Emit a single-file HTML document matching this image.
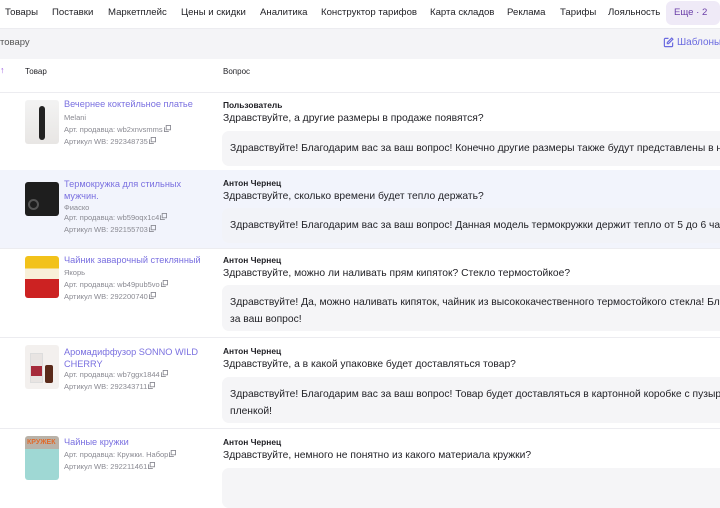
<!DOCTYPE html>
<html><head><meta charset="utf-8"><style>
*{margin:0;padding:0;box-sizing:border-box}
body{width:720px;height:480px;overflow:hidden;background:#fff;font-family:"Liberation Sans","Noto Sans CJK SC",sans-serif;color:#1f1f24;position:relative}
.a{position:absolute;white-space:nowrap}
.nav{font-size:9.6px;top:7px}
.pill{position:absolute;left:666px;top:1px;width:54px;height:24px;background:#efeaf7;border-radius:6px}
.t{color:#7a70e0;font-size:9.2px}
.m{color:#8a8a92;font-size:7.5px}
.au{font-size:8.4px;font-weight:bold}
.q{font-size:10.3px}
.box{position:absolute;left:222px;width:520px;background:#f5f5f7;border-radius:7px}
.bt{font-size:10.3px;line-height:17px;position:absolute;left:230px}
.img{position:absolute;left:25px;width:34px;border-radius:3px;overflow:hidden}
.hr{position:absolute;left:0;width:720px;height:1px;background:#ececf0}
svg.c{width:7px;height:7px;vertical-align:0px;margin-left:1px}
</style></head><body>
<div class="pill"></div>
<div class="a nav" style="left:5px">Товары</div>
<div class="a nav" style="left:52px">Поставки</div>
<div class="a nav" style="left:108px">Маркетплейс</div>
<div class="a nav" style="left:181px">Цены и скидки</div>
<div class="a nav" style="left:260px">Аналитика</div>
<div class="a nav" style="left:321px">Конструктор тарифов</div>
<div class="a nav" style="left:430px">Карта складов</div>
<div class="a nav" style="left:507px">Реклама</div>
<div class="a nav" style="left:560px">Тарифы</div>
<div class="a nav" style="left:608px">Лояльность</div>
<div class="a nav" style="left:674px;color:#6b3fa8">Еще · 2</div>
<div class="hr" style="top:28px"></div>
<div style="position:absolute;top:29px;left:0;width:720px;height:30px;background:#f4f4f7"></div>
<div class="a" style="left:0;top:37px;font-size:9.5px;color:#555">товару</div>
<svg class="a" style="left:663px;top:37px" width="11" height="11" viewBox="0 0 12 12" fill="none" stroke="#6a6ae0" stroke-width="1.3"><path d="M6 1.5H2.5a1 1 0 0 0-1 1v7a1 1 0 0 0 1 1h7a1 1 0 0 0 1-1V6"/><path d="M9.5 1.2l1.3 1.3L6 7.3H4.7V6z"/></svg>
<div class="a" style="left:677px;top:37px;font-size:10px;color:#6a6ae0">Шаблоны</div>
<div class="a" style="left:0;top:65px;font-size:9px;color:#9b5ce0">↑</div>
<div class="a" style="left:25px;top:67px;font-size:8px">Товар</div>
<div class="a" style="left:223px;top:67px;font-size:8px">Вопрос</div>
<div class="hr" style="top:92px"></div>

<!-- row 1 -->
<div class="img" style="top:100px;height:44px;background:linear-gradient(#f3f3f3,#e8e6e4)"><div style="position:absolute;left:14px;top:6px;width:6px;height:34px;background:#222;border-radius:3px"></div></div>
<div class="a t" style="left:64px;top:99px">Вечернее коктейльное платье</div>
<div class="a m" style="left:64px;top:113px">Melani</div>
<div class="a m" style="left:64px;top:125px">Арт. продавца: wb2xnvsmms<svg class="c" viewBox="0 0 8 8" fill="none" stroke="#8a8a92"><rect x="2.5" y=".5" width="5" height="5"/><path d="M.5 2.5v5h5"/></svg></div>
<div class="a m" style="left:64px;top:137px">Артикул WB: 292348735<svg class="c" viewBox="0 0 8 8" fill="none" stroke="#8a8a92"><rect x="2.5" y=".5" width="5" height="5"/><path d="M.5 2.5v5h5"/></svg></div>
<div class="a au" style="left:223px;top:100px">Пользователь</div>
<div class="a q" style="left:223px;top:113px">Здравствуйте, а другие размеры в продаже появятся?</div>
<div class="box" style="top:131px;height:35px"></div>
<div class="a bt" style="top:140px">Здравствуйте! Благодарим вас за ваш вопрос! Конечно другие размеры также будут представлены в н</div>

<!-- row 2 -->
<div style="position:absolute;top:170px;left:0;width:720px;height:78px;background:#f2f4fc"></div>
<div class="img" style="top:182px;height:34px;background:#1e1e1e"><div style="position:absolute;left:3px;top:17px;width:11px;height:11px;border:2px solid #555;border-radius:50%"></div></div>
<div class="a t" style="left:64px;top:178px;line-height:12px;white-space:normal;width:122px">Термокружка для стильных мужчин.</div>
<div class="a m" style="left:64px;top:203px">Фиаско</div>
<div class="a m" style="left:64px;top:213px">Арт. продавца: wb59oqx1c4<svg class="c" viewBox="0 0 8 8" fill="none" stroke="#8a8a92"><rect x="2.5" y=".5" width="5" height="5"/><path d="M.5 2.5v5h5"/></svg></div>
<div class="a m" style="left:64px;top:225px">Артикул WB: 292155703<svg class="c" viewBox="0 0 8 8" fill="none" stroke="#8a8a92"><rect x="2.5" y=".5" width="5" height="5"/><path d="M.5 2.5v5h5"/></svg></div>
<div class="a au" style="left:223px;top:178px">Антон Чернец</div>
<div class="a q" style="left:223px;top:191px">Здравствуйте, сколько времени будет тепло держать?</div>
<div class="box" style="top:208px;height:35px;background:#f2f3f8"></div>
<div class="a bt" style="top:217px">Здравствуйте! Благодарим вас за ваш вопрос! Данная модель термокружки держит тепло от 5 до 6 ча</div>
<div class="hr" style="top:248px"></div>

<!-- row 3 -->
<div class="img" style="top:256px;height:42px;background:linear-gradient(#f2c21a 0 30%,#f8f0d8 30% 55%,#c22 55%)"></div>
<div class="a t" style="left:64px;top:255px">Чайник заварочный стеклянный</div>
<div class="a m" style="left:64px;top:268px">Якорь</div>
<div class="a m" style="left:64px;top:280px">Арт. продавца: wb49pub5vo<svg class="c" viewBox="0 0 8 8" fill="none" stroke="#8a8a92"><rect x="2.5" y=".5" width="5" height="5"/><path d="M.5 2.5v5h5"/></svg></div>
<div class="a m" style="left:64px;top:292px">Артикул WB: 292200740<svg class="c" viewBox="0 0 8 8" fill="none" stroke="#8a8a92"><rect x="2.5" y=".5" width="5" height="5"/><path d="M.5 2.5v5h5"/></svg></div>
<div class="a au" style="left:223px;top:255px">Антон Чернец</div>
<div class="a q" style="left:223px;top:268px">Здравствуйте, можно ли наливать прям кипяток? Стекло термостойкое?</div>
<div class="box" style="top:285px;height:46px"></div>
<div class="a bt" style="top:294px">Здравствуйте! Да, можно наливать кипяток, чайник из высококачественного термостойкого стекла! Бл<br>за ваш вопрос!</div>
<div class="hr" style="top:337px"></div>

<!-- row 4 -->
<div class="img" style="top:345px;height:44px;background:#f3f0ee"><div style="position:absolute;left:5px;top:8px;width:13px;height:30px;background:#e8e4e2;border:1px solid #ddd"><div style="margin-top:12px;height:10px;background:#a52a3a"></div></div><div style="position:absolute;left:20px;top:20px;width:8px;height:18px;background:#5a2a1a;border-radius:2px"></div></div>
<div class="a t" style="left:64px;top:346px;line-height:12px;white-space:normal;width:138px">Аромадиффузор SONNO WILD CHERRY</div>
<div class="a m" style="left:64px;top:370px">Арт. продавца: wb7ggx1844<svg class="c" viewBox="0 0 8 8" fill="none" stroke="#8a8a92"><rect x="2.5" y=".5" width="5" height="5"/><path d="M.5 2.5v5h5"/></svg></div>
<div class="a m" style="left:64px;top:382px">Артикул WB: 292343711<svg class="c" viewBox="0 0 8 8" fill="none" stroke="#8a8a92"><rect x="2.5" y=".5" width="5" height="5"/><path d="M.5 2.5v5h5"/></svg></div>
<div class="a au" style="left:223px;top:346px">Антон Чернец</div>
<div class="a q" style="left:223px;top:359px">Здравствуйте, а в какой упаковке будет доставляться товар?</div>
<div class="box" style="top:377px;height:46px"></div>
<div class="a bt" style="top:386px">Здравствуйте! Благодарим вас за ваш вопрос! Товар будет доставляться в картонной коробке с пузыр<br>пленкой!</div>
<div class="hr" style="top:428px"></div>

<!-- row 5 -->
<div class="img" style="top:436px;height:44px;background:linear-gradient(#b9b2a8 0 30%,#9fd8d4 30%)"><div style="position:absolute;left:2px;top:3px;font-size:7px;color:#e06a2a;font-weight:bold">КРУЖЕК</div></div>
<div class="a t" style="left:64px;top:437px">Чайные кружки</div>
<div class="a m" style="left:64px;top:450px">Арт. продавца: Кружки. Набор<svg class="c" viewBox="0 0 8 8" fill="none" stroke="#8a8a92"><rect x="2.5" y=".5" width="5" height="5"/><path d="M.5 2.5v5h5"/></svg></div>
<div class="a m" style="left:64px;top:462px">Артикул WB: 292211461<svg class="c" viewBox="0 0 8 8" fill="none" stroke="#8a8a92"><rect x="2.5" y=".5" width="5" height="5"/><path d="M.5 2.5v5h5"/></svg></div>
<div class="a au" style="left:223px;top:437px">Антон Чернец</div>
<div class="a q" style="left:223px;top:450px">Здравствуйте, немного не понятно из какого материала кружки?</div>
<div class="box" style="top:468px;height:40px"></div>
</body></html>
